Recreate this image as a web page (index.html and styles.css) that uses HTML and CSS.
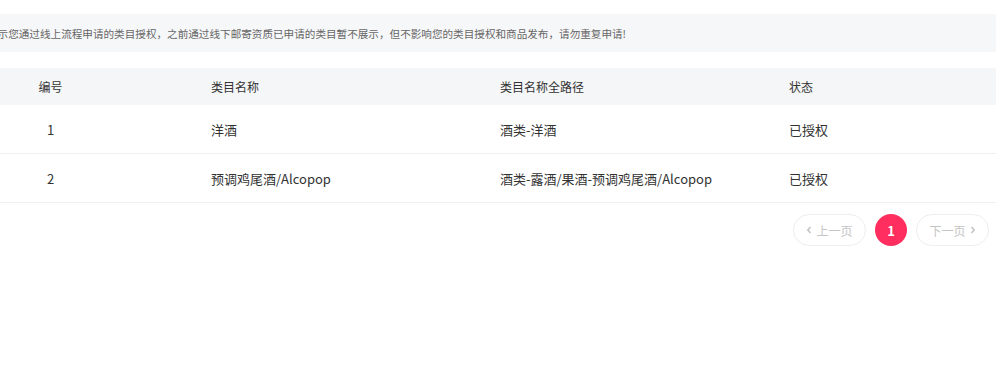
FILE: index.html
```html
<!DOCTYPE html>
<html lang="zh-CN">
<head>
<meta charset="utf-8">
<title>类目授权</title>
<link rel="stylesheet" href="styles.css">
</head>
<body>
<div class="page">
  <div class="notice"><span class="notice-text">显示您通过线上流程申请的类目授权，之前通过线下邮寄资质已申请的类目暂不展示，但不影响您的类目授权和商品发布，请勿重复申请!</span></div>

  <div class="table">
    <div class="row head">
      <div class="cell c-no">编号</div>
      <div class="cell">类目名称</div>
      <div class="cell">类目名称全路径</div>
      <div class="cell">状态</div>
    </div>
    <div class="row body">
      <div class="cell c-no">1</div>
      <div class="cell">洋酒</div>
      <div class="cell">酒类-洋酒</div>
      <div class="cell">已授权</div>
    </div>
    <div class="row body">
      <div class="cell c-no">2</div>
      <div class="cell">预调鸡尾酒/Alcopop</div>
      <div class="cell">酒类-露酒/果酒-预调鸡尾酒/Alcopop</div>
      <div class="cell">已授权</div>
    </div>
  </div>

  <div class="pager">
    <div class="pg-btn disabled">
      <svg class="chev" width="6" height="8" viewBox="0 0 6 8"><path d="M4.5 1 L1.8 4 L4.5 7" fill="none" stroke="currentColor" stroke-width="1.6"/></svg>
      <span>上一页</span>
    </div>
    <div class="pg-num active">1</div>
    <div class="pg-btn disabled">
      <span>下一页</span>
      <svg class="chev" width="6" height="8" viewBox="0 0 6 8"><path d="M1.5 1 L4.2 4 L1.5 7" fill="none" stroke="currentColor" stroke-width="1.6"/></svg>
    </div>
  </div>
</div>
</body>
</html>
```

FILE: styles.css
```css
html, body {
  margin: 0;
  padding: 0;
  background: #ffffff;
}

body {
  font-family: "Noto Sans CJK SC", "Noto Sans", sans-serif;
  color: #333333;
  overflow: hidden;
}

.page {
  padding-top: 14px;
}

.notice {
  height: 38px;
  background: #f6f7f9;
  display: flex;
  align-items: center;
  overflow: hidden;
  white-space: nowrap;
}

.notice-text {
  font-size: 10.6px;
  color: #666666;
  margin-left: -13px;
}

.table {
  margin-top: 16px;
}

.row {
  display: grid;
  grid-template-columns: 101px 289px 289px 1fr;
  align-items: center;
}

.row.head {
  height: 37px;
  background: #f5f6f8;
  font-size: 12px;
  color: #333333;
}

.row.body {
  height: 48px;
  border-bottom: 1px solid #f0f0f0;
  font-size: 13px;
  color: #333333;
}

.cell {
  padding-left: 110px;
  white-space: nowrap;
}

.cell.c-no {
  padding-left: 0;
  text-align: center;
}

.pager {
  margin-top: 11px;
  display: flex;
  justify-content: flex-end;
  gap: 9px;
  padding-right: 7px;
}

.pg-btn {
  height: 32px;
  width: 73px;
  box-sizing: border-box;
  border: 1px solid #eeeeee;
  border-radius: 16px;
  display: flex;
  align-items: center;
  justify-content: center;
  gap: 4px;
  font-size: 12px;
  color: #c4c4c4;
}

.chev {
  display: block;
}

.pg-num {
  width: 32px;
  height: 32px;
  border-radius: 50%;
  display: flex;
  align-items: center;
  justify-content: center;
  font-size: 13px;
  font-weight: bold;
}

.pg-num.active {
  background: #ff2e5f;
  color: #ffffff;
}
```
